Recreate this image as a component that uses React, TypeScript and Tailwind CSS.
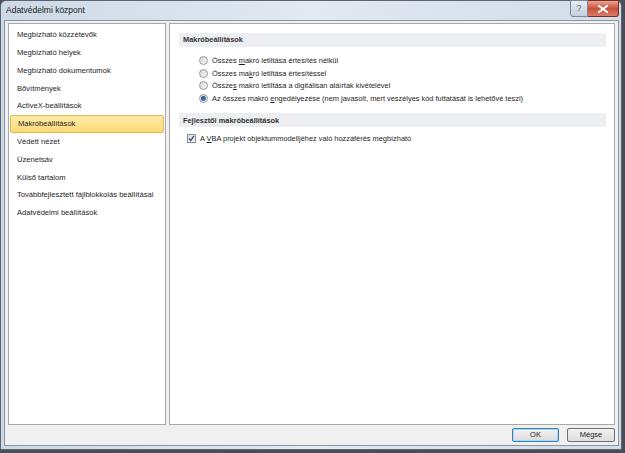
import React from "react";

const items = [
  "Megbízható közzétevők",
  "Megbízható helyek",
  "Megbízható dokumentumok",
  "Bővítmények",
  "ActiveX-beállítások",
  "Makróbeállítások",
  "Védett nézet",
  "Üzenetsáv",
  "Külső tartalom",
  "Továbbfejlesztett fájlblokkolás beállításai",
  "Adatvédelmi beállítások",
];

function Radio({ checked }: { checked?: boolean }) {
  return (
    <span className="relative inline-flex h-[9px] w-[9px] items-center justify-center rounded-full border border-[#9a9a9a] bg-gradient-to-br from-[#d8d8d8] to-[#f6f6f6]">
      {checked && <span className="h-[5px] w-[5px] rounded-full bg-gradient-to-br from-[#1e3f7a] to-[#5a8ad0]" />}
    </span>
  );
}

function U({ children }: { children: React.ReactNode }) {
  return <span className="underline underline-offset-[1px]">{children}</span>;
}

export default function App() {
  return (
    <div
      className="relative h-[453px] w-[625px] overflow-hidden bg-[#4a4f55] text-[#1e1e1e]"
      style={{ fontFamily: '"Liberation Sans", Arial, sans-serif' }}
    >
      <div className="flex h-[450px] w-[622px] flex-col rounded-t-[6px] border border-[#5b6470] bg-gradient-to-r from-[#ccd9e6] via-[#e2eaf2] to-[#d0dce8]">
        {/* Title bar */}
        <div className="relative flex h-[19px] items-center pl-[5px]">
          <span className="text-[8.5px] text-[#1a1a1a]">Adatvédelmi központ</span>
          <div className="absolute right-[2px] top-[-1px] flex">
            <div className="flex h-[17px] w-[18px] items-center justify-center rounded-bl-[3px] border border-[#7b8796] bg-gradient-to-b from-[#e6ecf3] to-[#c3cfdc] text-[9px] text-[#5a6674]">
              ?
            </div>
            <div className="flex h-[17px] w-[31px] items-center justify-center rounded-br-[3px] border border-l-0 border-[#7a2b22] bg-gradient-to-b from-[#e8a597] via-[#c9513d] to-[#d77b66]">
              <svg width="10" height="8" viewBox="0 0 10 8">
                <path d="M1 1 L9 7 M9 1 L1 7" stroke="#ffffff" strokeWidth="2" strokeLinecap="square" />
              </svg>
            </div>
          </div>
        </div>
        {/* Client area */}
        <div className="ml-[3px] mr-[2px] flex h-[426px] flex-col border border-[#8a96a4] bg-[#f0f0f0] pl-[3px] pr-[3px] pt-[2px]">
          <div className="flex h-[402px] gap-[3px]">
            {/* Left list */}
            <div className="w-[158px] border border-[#a9a9a9] bg-white pt-[2px]">
              {items.map((t, i) => (
                <div
                  key={t}
                  className={
                    "mx-[1px] flex h-[17.8px] items-center pl-[7px] text-[7.6px] " +
                    (i === 5
                      ? "rounded-[2px] border border-[#e2b857] bg-gradient-to-b from-[#fdeca6] to-[#fbd978] pl-[6px]"
                      : "")
                  }
                >
                  {t}
                </div>
              ))}
            </div>
            {/* Right panel */}
            <div className="flex-1 border border-[#a9a9a9] bg-white pl-[9px] pr-[8px] pt-[9px] text-[7.4px]">
              <div className="flex h-[14px] items-center bg-[#eceef2] pl-[4px] font-bold text-[#333]">
                Makróbeállítások
              </div>
              <div className="flex flex-col pl-[20px] pt-[7px]">
                <div className="flex h-[12.8px] items-center gap-[4px]">
                  <Radio />
                  <span>
                    Összes <U>m</U>akró letiltása értesítés nélkül
                  </span>
                </div>
                <div className="flex h-[12.8px] items-center gap-[4px]">
                  <Radio />
                  <span>
                    Összes ma<U>k</U>ró letiltása értesítéssel
                  </span>
                </div>
                <div className="flex h-[12.8px] items-center gap-[4px]">
                  <Radio />
                  <span>
                    Össze<U>s</U> makró letiltása a digitálisan aláírtak kivételével
                  </span>
                </div>
                <div className="flex h-[12.8px] items-center gap-[4px]">
                  <Radio checked />
                  <span>
                    Az összes makró <U>e</U>ngedélyezése (nem javasolt, mert veszélyes kód futtatását is lehetővé teszi)
                  </span>
                </div>
              </div>
              <div className="mt-[8px] flex h-[14px] items-center bg-[#eceef2] pl-[4px] font-bold text-[#333]">
                Fejlesztői makróbeállítások
              </div>
              <div className="mt-[5px] flex h-[12.8px] items-center gap-[4px] pl-[8px]">
                <span className="flex h-[9px] w-[9px] items-center justify-center border border-[#8f8f8f] bg-gradient-to-br from-[#dcdcdc] to-[#f8f8f8]">
                  <svg width="7" height="7" viewBox="0 0 7 7">
                    <path d="M1 3.5 L2.8 5.5 L6 1" stroke="#2a4f8f" strokeWidth="1.3" fill="none" />
                  </svg>
                </span>
                <span>
                  A <U>V</U>BA projekt objektummodelljéhez való hozzáférés megbízható
                </span>
              </div>
            </div>
          </div>
          <div className="flex justify-end gap-[8px] pt-[3px]">
            <button className="flex h-[14px] w-[47px] items-center justify-center rounded-[2px] border border-[#3c7fb1] bg-gradient-to-b from-[#f2f2f2] to-[#dcdcdc] text-[7.5px] shadow-[inset_0_0_0_1px_#a8d8f0]">
              OK
            </button>
            <button className="flex h-[14px] w-[48px] items-center justify-center rounded-[2px] border border-[#707070] bg-gradient-to-b from-[#f2f2f2] to-[#dcdcdc] text-[7.5px]">
              Mégse
            </button>
          </div>
        </div>
      </div>
    </div>
  );
}
